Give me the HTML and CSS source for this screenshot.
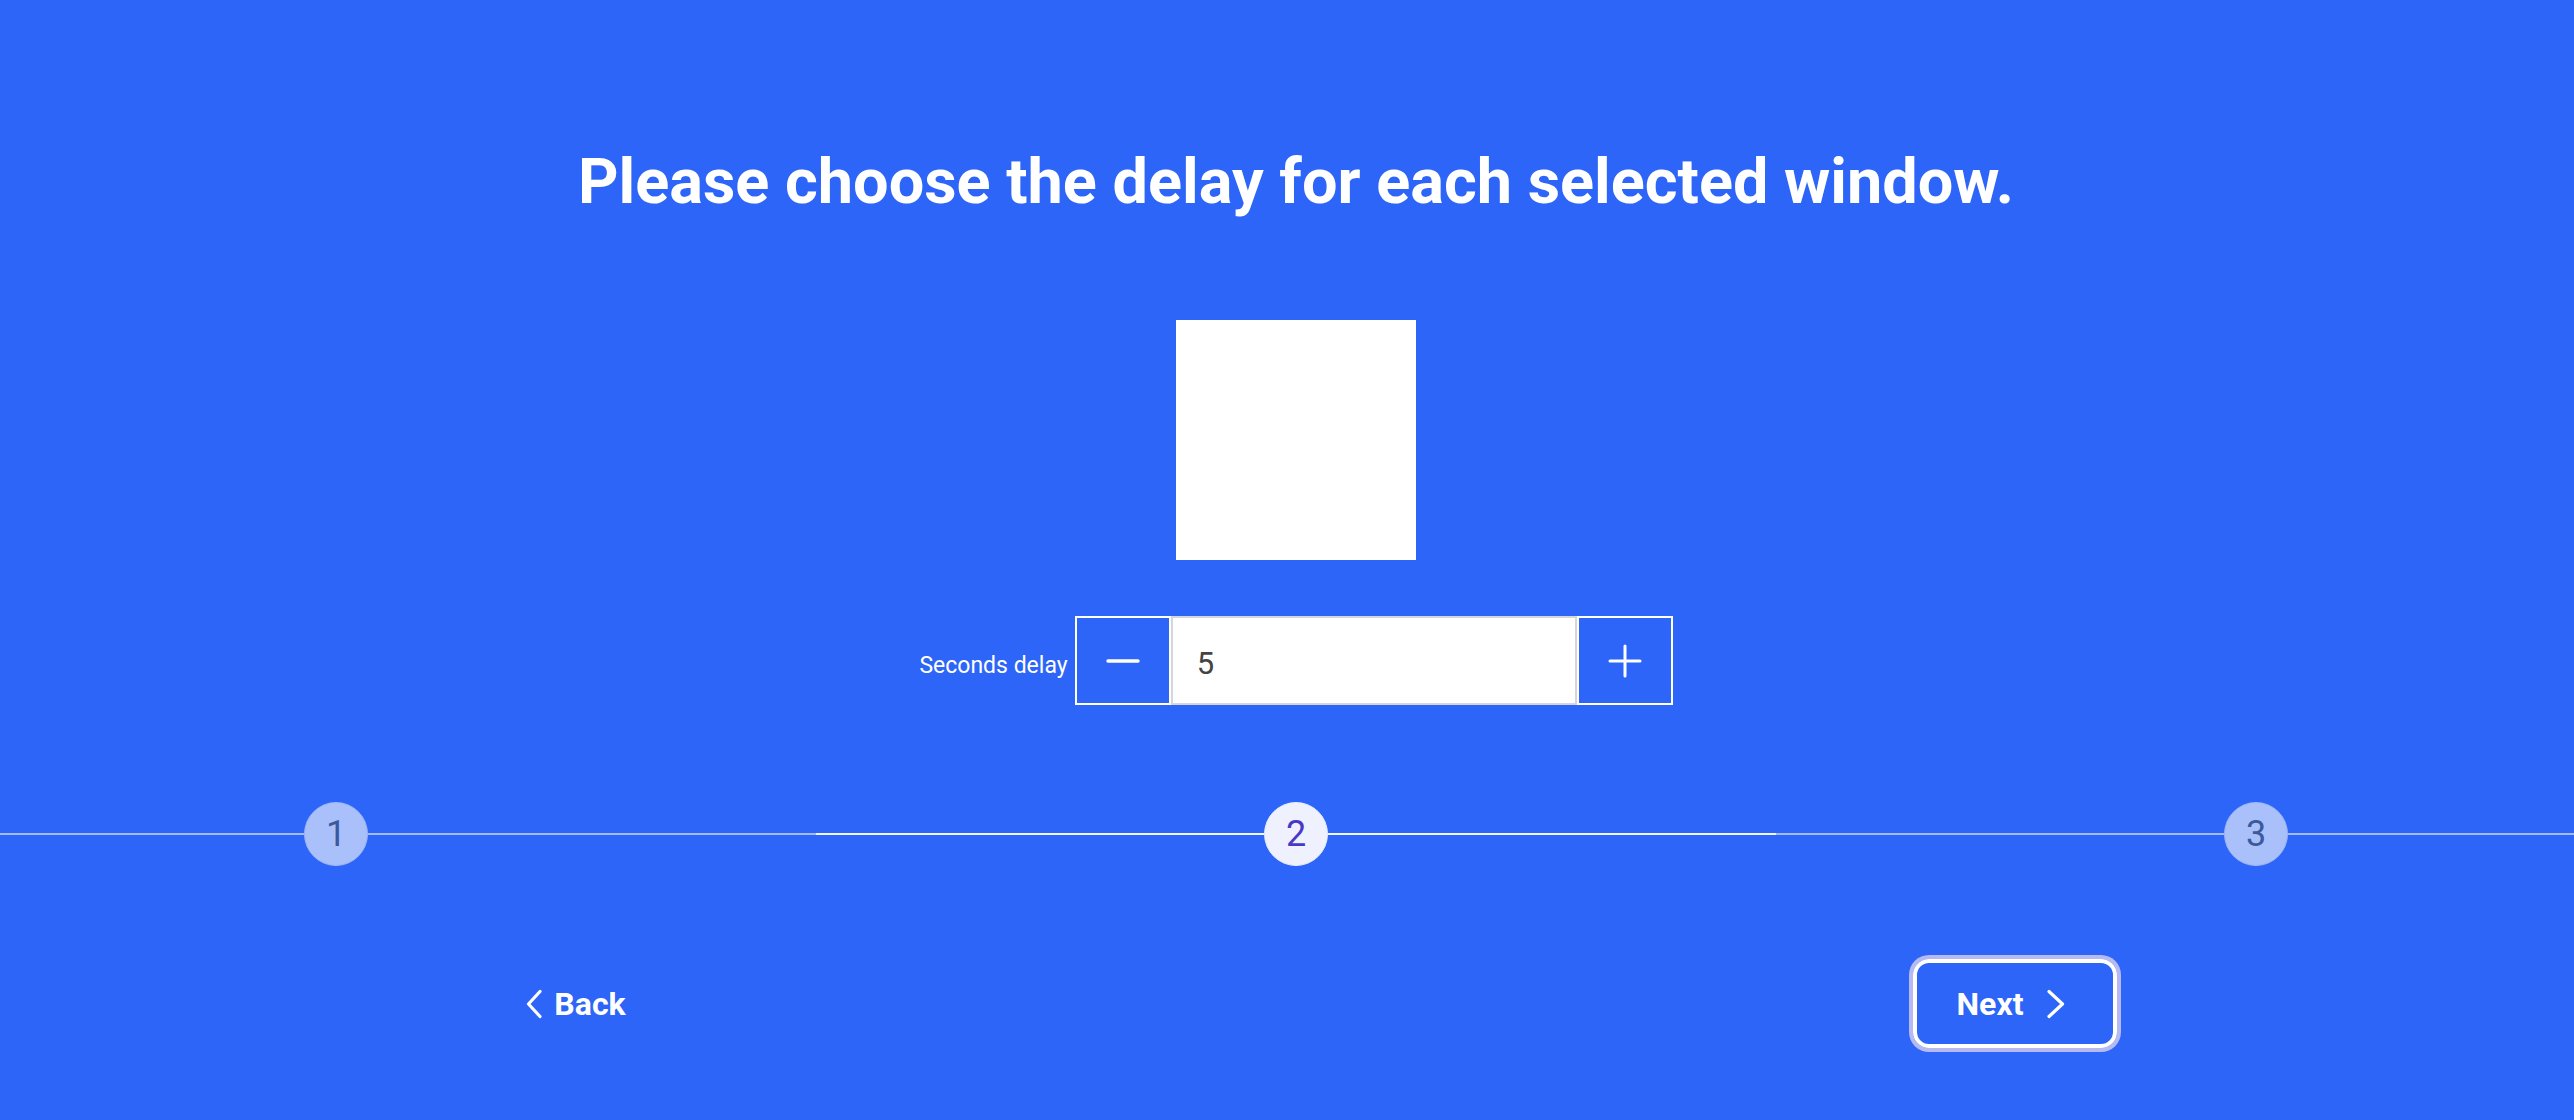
FILE: index.html
```html
<!DOCTYPE html>
<html lang="en">
<head>
<meta charset="utf-8">
<title>Delay</title>
<link rel="stylesheet" href="styles.css">
</head>
<body>
<main class="page">
  <h1 class="title">Please choose the delay for each selected window.</h1>
  <div class="preview"></div>
  <div class="delay-row">
    <label class="delay-label" for="delay">Seconds delay</label>
    <div class="stepper">
      <button class="step-btn" type="button" aria-label="Decrease">
        <svg width="34" height="6" viewBox="0 0 34 6"><path d="M2 3 H32" stroke="#fff" stroke-width="3.4" stroke-linecap="round"/></svg>
      </button>
      <input id="delay" class="delay-input" type="text" value="5">
      <button class="step-btn" type="button" aria-label="Increase">
        <svg width="34" height="34" viewBox="0 0 34 34"><path d="M2 17 H32 M17 2 V32" stroke="#fff" stroke-width="3" stroke-linecap="round"/></svg>
      </button>
    </div>
  </div>
  <div class="steps-wrap">
    <ol class="steps">
      <li class="step"><span class="line"></span><span class="dot">1</span><span class="line"></span></li>
      <li class="step active"><span class="line"></span><span class="dot">2</span><span class="line"></span></li>
      <li class="step"><span class="line"></span><span class="dot">3</span><span class="line"></span></li>
    </ol>
  </div>
  <nav class="nav">
    <button class="nav-btn back" type="button">
      <svg width="18" height="30" viewBox="0 0 18 30"><path d="M15 2.5 L3.5 15 L15 27.5" fill="none" stroke="#fff" stroke-width="3.2" stroke-linecap="round" stroke-linejoin="round"/></svg>
      <span>Back</span>
    </button>
    <button class="nav-btn next" type="button">
      <span>Next</span>
      <svg width="20" height="30" viewBox="0 0 20 30"><path d="M3 2.5 L16.5 15 L3 27.5" fill="none" stroke="#fff" stroke-width="3.2" stroke-linecap="round" stroke-linejoin="round"/></svg>
    </button>
  </nav>
</main>
</body>
</html>
```
FILE: styles.css
```css
html, body {
  margin: 0;
  padding: 0;
  overflow: hidden;
  background: #2c65f8;
}
body {
  font-family: Roboto, "Liberation Sans", sans-serif;
  color: #fff;
  height: 1120px;
}
.page {
  width: 100%;
  box-sizing: border-box;
  padding-left: 18px;
  display: flex;
  flex-direction: column;
  align-items: center;
}
.title {
  margin: 143px 0 0;
  font-size: 63px;
  line-height: 77px;
  font-weight: 700;
  text-align: center;
}
.preview {
  margin-top: 100px;
  width: 240px;
  height: 240px;
  background: #fff;
}
.delay-row {
  margin-top: 56px;
  display: flex;
  align-items: flex-end;
  gap: 7px;
  height: 89px;
}
.delay-label {
  font-size: 23px;
  line-height: 28px;
  margin-bottom: 25px;
  color: #fff;
}
.stepper {
  display: flex;
  height: 89px;
}
.step-btn {
  width: 96px;
  height: 89px;
  box-sizing: border-box;
  border: 2px solid #fff;
  background: transparent;
  padding: 0;
  display: flex;
  align-items: center;
  justify-content: center;
  cursor: pointer;
}
.delay-input {
  width: 406px;
  height: 89px;
  box-sizing: border-box;
  border: 2px solid #d4d6da;
  background: #fff;
  padding: 6px 0 0 24px;
  font-family: Roboto, "Liberation Sans", sans-serif;
  font-size: 31px;
  color: #444;
  outline: none;
}
.steps-wrap {
  margin-top: 97px;
  align-self: stretch;
  margin-left: -18px;
  overflow: hidden;
}
.steps {
  list-style: none;
  margin: 0 0 0 -144px;
  padding: 0;
  display: flex;
  width: 2880px;
}
.step {
  flex: 1;
  display: flex;
  align-items: center;
  height: 64px;
}
.line {
  flex: 1;
  height: 2px;
  background: #a3bafb;
}
.step.active .line {
  background: #f4f6fe;
}
.dot {
  width: 64px;
  height: 64px;
  border-radius: 50%;
  box-sizing: border-box;
  border: 1px solid #9eb5f6;
  background: #a9c0fb;
  color: #3a5a9c;
  font-size: 36px;
  display: flex;
  align-items: center;
  justify-content: center;
}
.step.active .dot {
  background: #eff2fe;
  border-color: #e6ebfd;
  color: #4a39c6;
}
.nav {
  margin-top: 93px;
  width: 1641px;
  display: flex;
  justify-content: space-between;
}
.nav-btn {
  width: 204px;
  height: 89px;
  box-sizing: border-box;
  border: 4px solid transparent;
  border-radius: 16px;
  background: transparent;
  color: #fff;
  font-family: Roboto, "Liberation Sans", sans-serif;
  font-size: 32px;
  font-weight: 700;
  display: flex;
  align-items: center;
  justify-content: center;
  padding: 0;
  cursor: pointer;
}
.back {
  gap: 11px;
  padding-right: 4px;
}
.next {
  gap: 23px;
  padding-right: 6px;
  border-color: #fff;
  box-shadow: 0 0 0 4px #b6b9f2;
}
```
